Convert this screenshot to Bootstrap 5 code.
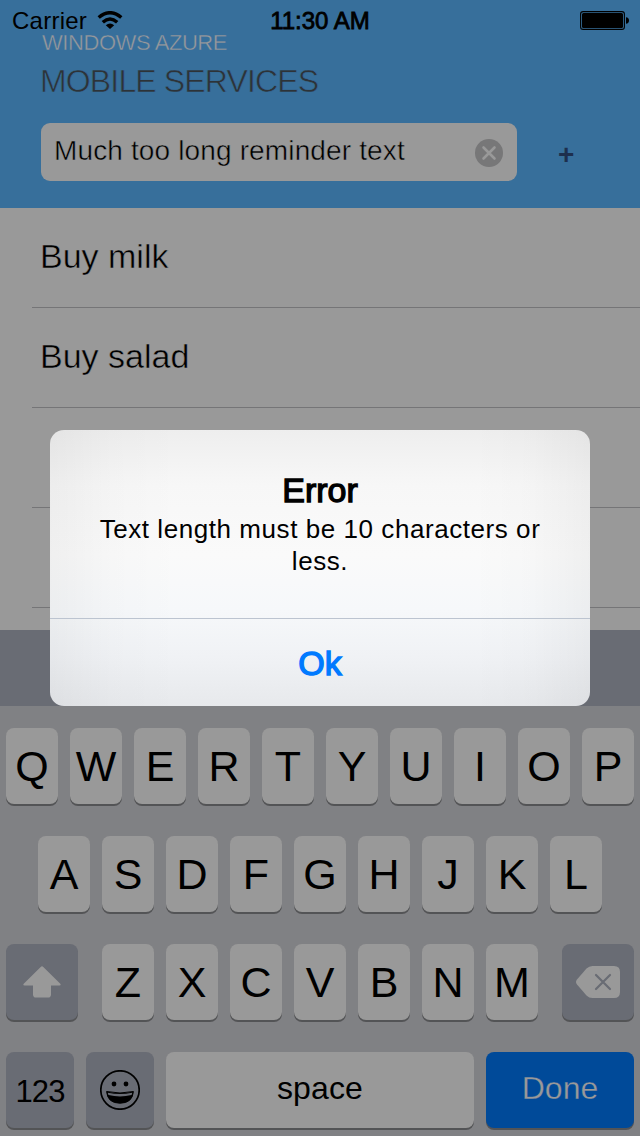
<!DOCTYPE html>
<html lang="en">
<head>
<meta charset="utf-8">
<meta name="viewport" content="width=device-width, initial-scale=1">
<title>Mobile Services</title>
<link href="https://cdn.jsdelivr.net/npm/bootstrap@5.3.0/dist/css/bootstrap.min.css" rel="stylesheet">
<style>
  body { font-family: "Liberation Sans", Arial, sans-serif; color: #000; background: #999; }
  .screen { width: 640px; height: 1136px; background: #999; }
  .statusbar { height: 41px; font-size: 24px; line-height: 41px; }
  .statusbar svg { display: block; }
  .carrier { left: 12px; letter-spacing: .25px; }
  .carrier svg { margin-top: 11px; }
  .clock { letter-spacing: 0; -webkit-text-stroke: .8px #000; }
  .battery { right: 11px; top: 11px; }
  .app-head { height: 208px; background: #376f9b; padding: 32px 40px 0; }
  .brand { font-size: 22px; line-height: 22px; letter-spacing: -.43px; color: #98999b; padding-left: 2px; -webkit-text-stroke: .4px #376f9b; }
  .product { font-size: 32px; line-height: 34px; letter-spacing: -.85px; color: #2d3338; margin-top: 10px; -webkit-text-stroke: .6px #376f9b; }
  .entry { width: 476px; height: 58px; margin: 25px 0 0 1px; padding: 0 14px 3px 13px; border-radius: 9px; background: #999; font-size: 28px; letter-spacing: .14px; }
  .entry span { padding-top: 1px; }
  .thin { -webkit-text-stroke: .5px #999; }
  .entry svg { margin-top: 4px; }
  .add { margin: 28px 0 0 41px; font-size: 28px; line-height: 58px; color: #1d2f4e; }
  .todos { height: 422px; overflow: hidden; border-radius: 0; }
  .todos .todo { height: 100px; margin: 0 0 0 32px; padding: 0 0 3px 8px; background: none; border: 0; border-bottom: 1px solid #757577; border-radius: 0; font-size: 34px; color: #000; }
  .accessory { height: 76px; background: #696c74; }
  .keys { height: 430px; background: #808184; padding: 22px 6px 0; gap: 32px; }
  .keyrow { gap: 12px; height: 76px; }
  .key { height: 76px; width: 52px; border: 0; border-radius: 8px; padding: 1px 0 0; background: #999; color: #000; box-shadow: 0 2px 0 #535456; font-size: 43px; line-height: 1; }
  .key-alt { background: #696c74; }
  .key-shift { width: 72px; padding: 0; }
  .key-mode { width: 68px; font-size: 31px; letter-spacing: -.9px; padding-top: 3px; }
  .key-space { width: 308px; font-size: 32px; padding: 0 0 5px; letter-spacing: .15px; }
  .key-done { width: 148px; font-size: 32px; padding: 0 0 5px; background: #004a99; color: #999; -webkit-text-stroke: .3px #004a99; }
  .alertbox { left: 50px; top: 430px; width: 540px; height: 276px; border: 0; border-radius: 14px; overflow: hidden; color: #000;
    background: linear-gradient(90deg, rgba(0,0,0,.045), rgba(0,0,0,.012) 12%, transparent 24%, transparent 78%, rgba(0,0,0,.012) 89%, rgba(0,0,0,.045)),
      linear-gradient(180deg, #eeeeee, #f7f7f7 20%, #fafafa 45%, #f6f8fa 65%, #f0f2f5 82%, #e7e9ec); }
  .alert-copy { height: 188px; padding-top: 40px; }
  .alert-head { font-size: 34px; line-height: 40px; letter-spacing: 0; -webkit-text-stroke: 1.3px #000; }
  .alert-msg { font-size: 26px; line-height: 32px; margin-top: 3px; letter-spacing: .56px; }
  .alert-ok { height: 88px; border: 0; border-top: 1px solid #bcc4d0; border-radius: 0; padding: 1px 0 0; font-size: 34px; color: #007aff; -webkit-text-stroke: 1.4px #007aff; }
</style>
</head>
<body>
<div class="screen position-relative overflow-hidden">
  <header class="app-head">
    <div class="brand">WINDOWS AZURE</div>
    <div class="product">MOBILE SERVICES</div>
    <div class="d-flex">
      <div class="entry d-flex align-items-center justify-content-between">
        <span class="thin text-nowrap">Much too long reminder text</span>
        <svg width="28" height="28" viewBox="0 0 28 28"><circle cx="14" cy="14" r="14" fill="#777778"/><path d="M8.500 8.500l11 11M19.500 8.500l-11 11" stroke="#999" stroke-width="2.600" stroke-linecap="round"/></svg>
      </div>
      <span class="add fw-bold">+</span>
    </div>
  </header>

  <ul class="list-group todos">
    <li class="list-group-item todo d-flex align-items-center flex-shrink-0"><span class="thin">Buy milk</span></li>
    <li class="list-group-item todo d-flex align-items-center flex-shrink-0"><span class="thin">Buy salad</span></li>
    <li class="list-group-item todo flex-shrink-0"></li>
    <li class="list-group-item todo flex-shrink-0"></li>
  </ul>

  <div class="accessory"></div>
  <div class="keys d-flex flex-column">
    <div class="keyrow d-flex justify-content-center">
      <button class="key">Q</button><button class="key">W</button><button class="key">E</button><button class="key">R</button><button class="key">T</button><button class="key">Y</button><button class="key">U</button><button class="key">I</button><button class="key">O</button><button class="key">P</button>
    </div>
    <div class="keyrow d-flex justify-content-center">
      <button class="key">A</button><button class="key">S</button><button class="key">D</button><button class="key">F</button><button class="key">G</button><button class="key">H</button><button class="key">J</button><button class="key">K</button><button class="key">L</button>
    </div>
    <div class="d-flex justify-content-between">
      <button class="key key-alt key-shift d-flex align-items-center justify-content-center" aria-label="Shift">
        <svg width="38" height="32" viewBox="0 0 38 32"><path d="M19 0.300Q19.700 .3 20.300 .9L37.300 17.800Q38.300 19.400 36.500 19.600H28V28.500Q28 31.600 25 31.600H13Q10 31.600 10 28.500V19.600H1.500Q-.3 19.400 .7 17.800L17.700 .9Q18.300 .3 19 .3Z" fill="#999"/></svg>
      </button>
      <div class="keyrow d-flex">
        <button class="key">Z</button><button class="key">X</button><button class="key">C</button><button class="key">V</button><button class="key">B</button><button class="key">N</button><button class="key">M</button>
      </div>
      <button class="key key-alt key-shift d-flex align-items-center justify-content-center" aria-label="Delete">
        <svg width="44" height="32" viewBox="0 0 44 32"><path d="M16.500 0H38Q44 0 44 6V26Q44 32 38 32H16.500Q13 32 10.500 29.500L1 18.500Q-1 16 1 13.500L10.500 2.500Q13 0 16.500 0Z" fill="#999"/><path d="M20 9l14 14M34 9L20 23" stroke="#696c74" stroke-width="2.200" stroke-linecap="round"/></svg>
      </button>
    </div>
    <div class="keyrow d-flex">
      <button class="key key-alt key-mode">123</button>
      <button class="key key-alt key-mode d-flex align-items-center justify-content-center p-0" aria-label="Emoji">
        <svg width="40" height="40" viewBox="0 0 40 40"><circle cx="20" cy="20" r="19.200" fill="none" stroke="#000" stroke-width="1.700"/><circle cx="14" cy="14" r="2.400"/><circle cx="26" cy="14" r="2.400"/><path d="M6.600 21.500Q20 24.500 33.400 21.500Q32.500 33.200 20 33.200T6.600 21.500Z" fill="#000" stroke="#000" stroke-width="1" stroke-linejoin="round"/><path d="M7.800 22.700Q20 25.200 32.200 22.700Q32 24.200 31.500 25Q20 27.800 8.500 25Q8 24.200 7.800 22.700Z" fill="#696c74"/></svg>
      </button>
      <button class="key key-space">space</button>
      <button class="key key-done">Done</button>
    </div>
  </div>

  <div class="statusbar position-absolute top-0 start-0 w-100 text-center">
    <div class="carrier position-absolute top-0 d-flex">Carrier
      <svg class="ms-2" width="30" height="18" viewBox="-.5 0 30 18"><g fill="none" stroke="#000" stroke-width="3.500"><path d="M3.200 6.500Q14.500 -3 25.800 6.500"/><path d="M7.300 11.200Q14.500 4.800 21.700 11.200"/></g><path d="M10.300 14.200Q14.500 10.800 18.700 14.200L14.500 18Z"/></svg>
    </div>
    <span class="clock">11:30 AM</span>
    <svg class="battery position-absolute" width="49" height="19" viewBox="0 0 49 19"><rect x=".6" y=".6" width="43.800" height="17.800" rx="2.500" fill="none" stroke="#000" stroke-width="1.100"/><rect x="2" y="2" width="41" height="15" rx="1.500"/><path d="M46 6.200Q49 6.500 49 9.500T46 12.800Z"/></svg>
  </div>

  <div class="alertbox position-absolute text-center d-flex flex-column" role="alertdialog">
    <div class="alert-copy">
      <div class="alert-head">Error</div>
      <div class="alert-msg">Text length must be 10 characters or<br>less.</div>
    </div>
    <button class="alert-ok btn w-100">Ok</button>
  </div>
</div>
<script src="https://cdn.jsdelivr.net/npm/bootstrap@5.3.0/dist/js/bootstrap.bundle.min.js"></script>
</body>
</html>
